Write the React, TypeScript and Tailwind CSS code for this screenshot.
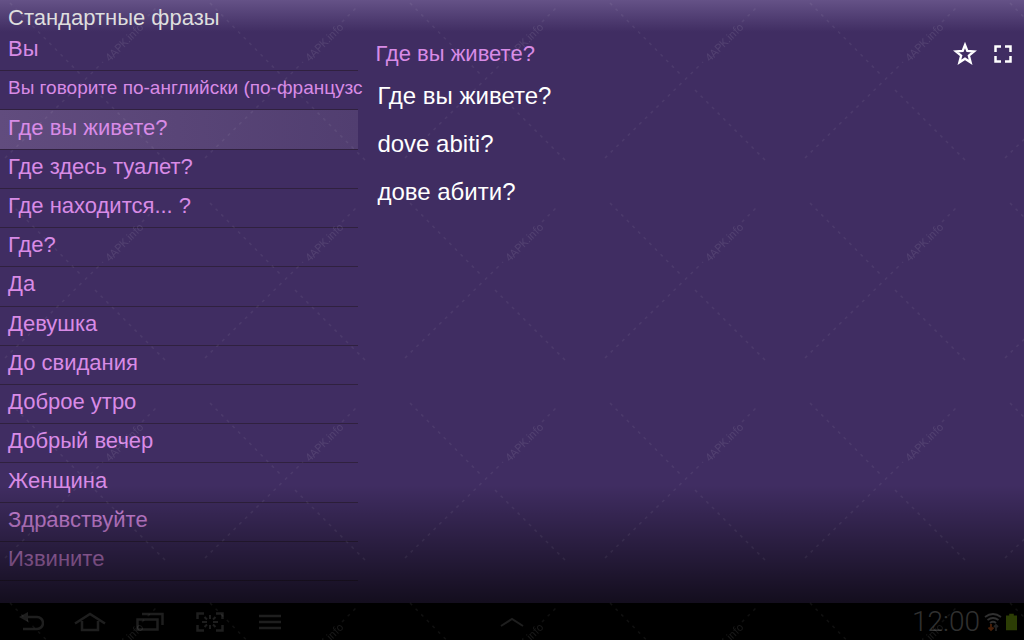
import { useState } from "react";

interface Phrase {
	source: string;
	translation?: string;
	reading?: string;
	long?: boolean;
}

const PHRASES: Phrase[] = [
	{ source: "Вы" },
	{ source: "Вы говорите по-английски (по-французс", long: true },
	{ source: "Где вы живете?", translation: "dove abiti?", reading: "дове абити?" },
	{ source: "Где здесь туалет?" },
	{ source: "Где находится... ?" },
	{ source: "Где?" },
	{ source: "Да" },
	{ source: "Девушка" },
	{ source: "До свидания" },
	{ source: "Доброе утро" },
	{ source: "Добрый вечер" },
	{ source: "Женщина" },
	{ source: "Здравствуйте" },
	{ source: "Извините" },
];

function PhraseList({ selected, onSelect }: { selected: number; onSelect: (i: number) => void }) {
	return (
		<ul className="flex min-h-0 flex-1 flex-col">
			{PHRASES.map((phrase, i) => (
				<li
					key={phrase.source}
					className={`flex flex-1 border-b border-[#30213f] ${
						i === selected ? "bg-linear-to-r from-[#614c7e] to-[#513e70]" : ""
					}`}
				>
					<button
						type="button"
						onClick={() => onSelect(i)}
						className={`flex-1 whitespace-nowrap pb-1 pl-2 text-left text-[#d88be6] ${
							phrase.long ? "text-[19px] leading-6" : "text-[22px] leading-6"
						}`}
					>
						{phrase.source}
					</button>
				</li>
			))}
		</ul>
	);
}

function PhraseDetails({ phrase }: { phrase: Phrase }) {
	return (
		<main className="flex-1 pl-[17px]">
			<div className="flex items-center justify-between pr-[7px]">
				<h2 className="text-[22px] leading-7 text-[#d88be6]">{phrase.source}</h2>
				<div className="flex gap-2">
					<button type="button" aria-label="В избранное" className="flex size-8 items-center justify-center">
						<svg viewBox="0 0 24 24" className="size-7" fill="none" stroke="white" strokeWidth="2">
							<path d="M12 4.300l2 5.100 5.700.4-4.400 3.600 1.500 5.700L12 16l-4.800 3.100 1.500-5.700-4.400-3.600 5.700-.4z" />
						</svg>
					</button>
					<button type="button" aria-label="Во весь экран" className="flex h-8 w-7 items-center justify-center">
						<svg viewBox="0 0 18 18" className="size-[18px]" fill="none" stroke="white" strokeWidth="2.500">
							<path d="M1.500 7V1.500H7M11 1.500h5.500V7M16.500 11v5.500H11M7 16.500H1.500V11" />
						</svg>
					</button>
				</div>
			</div>
			<div className="flex flex-col gap-5 pl-0.5 pt-3 text-2xl leading-7 text-white">
				<p>{phrase.source}</p>
				<p>{phrase.translation}</p>
				<p>{phrase.reading}</p>
			</div>
		</main>
	);
}

function SystemBar() {
	const button = "flex w-[60px] items-center justify-center";
	return (
		<nav className="grid h-[37px] grid-cols-[1fr_auto_1fr] bg-black text-[#1e1e1e]">
			<div className="flex">
				<button type="button" aria-label="Назад" className={button}>
					<svg viewBox="0 0 28 20" className="h-5 w-7" fill="none" stroke="currentColor" strokeWidth="2.500">
						<path d="M9 5h12a5.500 5.500 0 0 1 0 12H7" />
						<path d="M12 0v10L3 5z" fill="currentColor" stroke="none" />
					</svg>
				</button>
				<button type="button" aria-label="Домой" className={button}>
					<svg viewBox="0 0 32 20" className="h-5 w-8" fill="none" stroke="currentColor" strokeWidth="2.500">
						<path d="M1 11.500L16 2l15 9.500M8 9v9h16V9" />
					</svg>
				</button>
				<button type="button" aria-label="Недавние" className={button}>
					<svg viewBox="0 0 28 20" className="h-5 w-7" fill="none" stroke="currentColor" strokeWidth="2.500">
						<path d="M6 2h20.500v11" />
						<path d="M1.500 7.500h20v10h-20z" />
					</svg>
				</button>
				<button type="button" aria-label="Снимок экрана" className={button}>
					<svg viewBox="0 0 28 20" className="h-5 w-7" fill="none" stroke="currentColor" strokeWidth="2.500">
						<path d="M1.500 7V1.500H8M20 1.500h6.500V7M26.500 13v5.500H20M8 18.500H1.500V13" />
						<path strokeWidth="2" d="M14 3v4M14 13v4M6 10h5M17 10h5M8.500 5l2.500 2.500M19.500 5L17 7.500M8.500 15l2.500-2.500M19.500 15L17 12.500" />
					</svg>
				</button>
				<button type="button" aria-label="Меню" className={button}>
					<svg viewBox="0 0 22 16" className="h-4 w-[22px]" fill="none" stroke="currentColor" strokeWidth="2.500">
						<path d="M0 2h22M0 8h22M0 14h22" />
					</svg>
				</button>
			</div>
			<button type="button" aria-label="Показать панель" className="flex items-center justify-center">
				<svg viewBox="0 0 24 10" className="h-2.5 w-6" fill="none" stroke="currentColor" strokeWidth="2">
					<path d="M1 9l11-7 11 7" />
				</svg>
			</button>
			<div className="flex items-center justify-end gap-1 pr-[7px]">
				<span className="font-['Roboto',sans-serif] text-[28px] font-light leading-8 text-[#303030]">12:00</span>
				<svg viewBox="0 0 18 20" className="h-5 w-[18px]" fill="none" strokeWidth="1.800">
					<path stroke="#303030" d="M1 5q8-6 16 0M3.500 8q5.500-4 11 0M6 11q3-2.500 6 0" />
					<path stroke="#4a2008" d="M7 12v6M4.500 15.500L7 18l2.500-2.500" />
					<path stroke="#242424" d="M12 19v-6M10 15l2-2 2 2" />
				</svg>
				<svg viewBox="0 0 12 18" className="h-[18px] w-[11px]" fill="#2c3d05">
					<path d="M3.500 0h5v2H12v16H0V2h3.500z" />
				</svg>
			</div>
		</nav>
	);
}

// Repeating site mark laid over the whole screen
function Watermark() {
	return (
		<svg className="pointer-events-none absolute inset-0 size-full opacity-10" aria-hidden="true">
			<defs>
				<pattern id="mark" width="200" height="200" patternUnits="userSpaceOnUse">
					<path
						d="M10 3l73 74M95 90l72 72M5 158l98-96M142 22l15-15"
						fill="none"
						stroke="white"
						strokeOpacity="0.6"
						strokeWidth="1.500"
						strokeDasharray="3 5"
					/>
					<text
						x="127"
						y="45"
						transform="rotate(-45 127 45)"
						textAnchor="middle"
						fontSize="11"
						fontFamily="Roboto, sans-serif"
						fill="white"
						fillOpacity="0.9"
					>
						4APK.info
					</text>
				</pattern>
			</defs>
			<rect width="100%" height="100%" fill="url(#mark)" />
		</svg>
	);
}

export default function App() {
	const [selected, setSelected] = useState(2);

	return (
		<div className="relative flex h-screen flex-col overflow-hidden bg-[#402d62] font-['Liberation_Sans',Arial,sans-serif]">
			<div className="relative flex min-h-0 flex-1 bg-linear-to-b from-[#655287] to-[#402d62] to-[32px]">
				<div className="flex w-[35%] flex-col pb-[22px]">
					<h1 className="pb-0.5 pl-2 pt-[5px] text-[22px] leading-[25px] text-[#dedede]">Стандартные фразы</h1>
					<PhraseList selected={selected} onSelect={setSelected} />
				</div>
				<div className="flex flex-1 pt-[38px]">
					<PhraseDetails phrase={PHRASES[selected]} />
				</div>
				{/* Fade into the system bar */}
				<div className="pointer-events-none absolute inset-x-0 bottom-0 h-[118px] bg-linear-to-b from-transparent to-black/70" />
			</div>
			<SystemBar />
			<Watermark />
		</div>
	);
}
